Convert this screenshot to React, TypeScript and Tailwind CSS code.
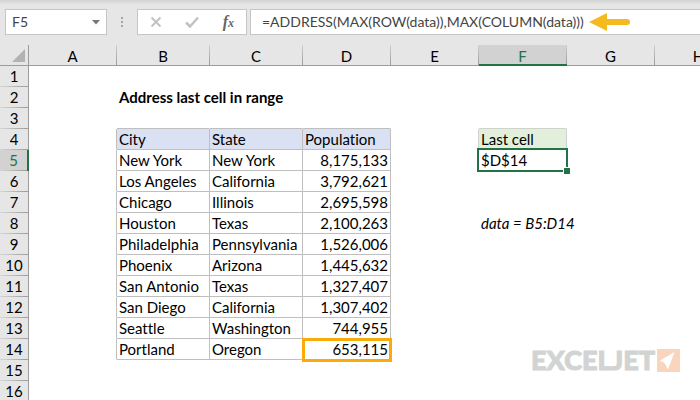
import React from "react";

type Entry = { city: string; state: string; population: string };

const data: Entry[] = [
  { city: "New York", state: "New York", population: "8,175,133" },
  { city: "Los Angeles", state: "California", population: "3,792,621" },
  { city: "Chicago", state: "Illinois", population: "2,695,598" },
  { city: "Houston", state: "Texas", population: "2,100,263" },
  { city: "Philadelphia", state: "Pennsylvania", population: "1,526,006" },
  { city: "Phoenix", state: "Arizona", population: "1,445,632" },
  { city: "San Antonio", state: "Texas", population: "1,327,407" },
  { city: "San Diego", state: "California", population: "1,307,402" },
  { city: "Seattle", state: "Washington", population: "744,955" },
  { city: "Portland", state: "Oregon", population: "653,115" },
];

const columns = [
  { name: "A", width: "w-[88px]" },
  { name: "B", width: "w-[93px]" },
  { name: "C", width: "w-[93px]" },
  { name: "D", width: "w-[88px]" },
  { name: "E", width: "w-[88px]" },
  { name: "F", width: "w-[88px]" },
  { name: "G", width: "w-[88px]" },
  { name: "H", width: "w-[88px]" },
];

const rows = Array.from({ length: 16 }, (_, i) => i + 1);

function cellText(col: string, row: number): string {
  if (col === "B" && row === 2) return "Address last cell in range";
  if (col === "F" && row === 4) return "Last cell";
  if (col === "F" && row === 5) return "$D$14";
  if (col === "F" && row === 8) return "data = B5:D14";
  if (row === 4) return { B: "City", C: "State", D: "Population" }[col] ?? "";
  const entry = data[row - 5];
  if (!entry) return "";
  return { B: entry.city, C: entry.state, D: entry.population }[col] ?? "";
}

// Each cell owns its right and bottom line; neighbours above and to the left close the box.
function cellStyle(col: string, row: number): string {
  const inTable = row >= 4 && row <= 14;
  const right =
    inTable && "ABCD".includes(col)
      ? "border-r-[#bfbfbf]"
      : row === 4 && "EF".includes(col)
        ? "border-r-[#d0d3cd]"
        : "border-r-transparent";
  const bottom =
    (inTable || row === 3) && "BCD".includes(col)
      ? "border-b-[#bfbfbf]"
      : row === 3 && col === "F"
        ? "border-b-[#d0d3cd]"
        : "border-b-transparent";
  let extra = "";
  if (row === 4 && "BCD".includes(col)) extra = "bg-[#d9e1f2]";
  if (row === 4 && col === "F") extra = "bg-[#e2efda]";
  if (row > 4 && col === "D") extra = "text-right";
  if (row === 2) extra = "font-bold";
  if (row === 8 && col === "F") extra = "italic";
  return `${right} ${bottom} ${extra}`;
}

function FormulaBar() {
  return (
    <header className="flex h-[45px] items-start bg-linear-to-b from-[#d2d2d2] to-[#e6e6e6] to-10% pt-[9px] pl-[5px] text-[#444]">
      <div className="flex h-[26px] w-[102px] shrink-0 items-center border border-[#c6c6c6] bg-white">
        <input
          aria-label="Name box"
          defaultValue="F5"
          className="w-full min-w-0 bg-transparent pl-1.5 text-sm outline-none"
        />
        <button aria-label="Show names" className="mr-1.5 shrink-0">
          <svg width="8" height="5" viewBox="0 0 8 5" className="block">
            <path d="M0 0h8L4 4.500z" fill="#777" />
          </svg>
        </button>
      </div>
      <svg width="30" height="26" viewBox="0 0 30 26" className="shrink-0" fill="#a6a6a6" aria-hidden="true">
        <path d="M14 8h2v2h-2zM14 12h2v2h-2zM14 16h2v2h-2z" />
      </svg>
      <div className="flex h-[26px] w-[110px] shrink-0 items-center justify-between border border-[#c6c6c6] bg-white pr-3 pl-3">
        <button aria-label="Cancel">
          <svg width="12" height="12" viewBox="0 0 12 12" fill="none" stroke="#c2c2c2" strokeWidth="2" className="block">
            <path d="M1.500 1.500l9 9M10.500 1.500l-9 9" />
          </svg>
        </button>
        <button aria-label="Enter">
          <svg width="14" height="12" viewBox="0 0 14 12" fill="none" stroke="#c2c2c2" strokeWidth="2.500" className="block">
            <path d="M1 6.500l4 4L13 1.500" />
          </svg>
        </button>
        <button aria-label="Insert function" className="font-['Liberation_Serif',serif] text-base leading-5 font-bold text-[#666] italic">
          f<span className="text-xs">x</span>
        </button>
      </div>
      <div className="ml-[3px] flex h-[26px] min-w-0 flex-1 items-center border border-r-0 border-[#c6c6c6] bg-white">
        <input
          aria-label="Formula"
          defaultValue="=ADDRESS(MAX(ROW(data)),MAX(COLUMN(data)))"
          className="w-[338px] shrink-0 bg-transparent pl-[11px] text-sm outline-none"
        />
        <svg width="42" height="20" viewBox="0 0 42 20" className="shrink-0" aria-hidden="true">
          <path d="M0 10L18 1v6h20a3 3 0 0 1 0 6H18v6z" fill="#f4bb20" />
        </svg>
      </div>
    </header>
  );
}

function ColumnHeader({ name }: { name: string }) {
  const active = name === "F";
  return (
    <th scope="col" className="p-0 font-normal">
      <div className={`flex h-[21px] ${active ? "border-b-2 border-[#217346] bg-[#d2d2d2] text-[#217346]" : "border-b border-[#9b9b9b]"}`}>
        <span className="flex-1 pt-px leading-5">{name}</span>
        <span className="w-px bg-linear-to-b from-[#cfcfcf] to-[#9b9b9b]" />
      </div>
    </th>
  );
}

function RowHeader({ row }: { row: number }) {
  const active = row === 5;
  return (
    <th scope="row" className={`p-0 font-normal ${active ? "bg-[#d2d2d2] text-[#217346]" : "bg-[#e6e6e6]"}`}>
      <div className={`h-[21px] ${active ? "border-r-2 border-[#217346]" : "border-r border-[#9b9b9b]"}`}>
        <div className="h-5 leading-5">{row}</div>
        <div className="h-px bg-linear-to-r from-[#d6d6d6] to-[#9b9b9b]" />
      </div>
    </th>
  );
}

function Sheet() {
  return (
    <table className="w-[743px] table-fixed border-separate border-spacing-0 text-[15px] leading-5 [font-variant-ligatures:none]">
      <colgroup>
        <col className="w-[29px]" />
        {columns.map((c) => (
          <col key={c.name} className={c.width} />
        ))}
      </colgroup>
      <thead className="bg-[#e6e6e6]">
        <tr>
          <td className="border-r border-b border-[#9b9b9b] p-0">
            <svg width="28" height="20" viewBox="0 0 28 20" className="block" aria-hidden="true">
              <path d="M25 4v13H12z" fill="#b2b2b2" />
            </svg>
          </td>
          {columns.map((c) => (
            <ColumnHeader key={c.name} name={c.name} />
          ))}
        </tr>
      </thead>
      <tbody>
        {rows.map((row) => (
          <tr key={row}>
            <RowHeader row={row} />
            {columns.map(({ name }) => (
              <td
                key={name}
                className={`relative h-[21px] border-r border-b bg-clip-padding px-0.5 py-0 whitespace-nowrap ${cellStyle(name, row)}`}
              >
                {cellText(name, row)}
                {name === "D" && row === 14 && (
                  <span className="absolute -top-px -right-0.5 -bottom-[3px] -left-px z-10 border-3 border-[#fbab09]" />
                )}
                {name === "F" && row === 5 && (
                  <span className="absolute -inset-0.5 z-10 border-2 border-[#217346]">
                    <span className="absolute -right-1 -bottom-1 size-[7px] border-t border-l border-white bg-[#217346]" />
                  </span>
                )}
              </td>
            ))}
          </tr>
        ))}
      </tbody>
    </table>
  );
}

function Watermark() {
  return (
    <div className="absolute right-5 bottom-6 flex items-center gap-0.5 text-[#d1d4d3]">
      <span className="text-[27px] leading-8 font-black [-webkit-text-stroke:1px_#d1d4d3]">
        EXCELJET
      </span>
      <svg width="23" height="23" viewBox="0 0 23 23" aria-hidden="true">
        <path d="M0 0h23v23H0z" fill="#f9d5bd" />
        <path d="M17.500 3L3 11.500l4.500 2.500 3.500 6.500z" fill="#fff" />
      </svg>
    </div>
  );
}

export default function App() {
  return (
    <main className="relative h-screen w-full overflow-hidden bg-white font-['Lato',sans-serif] text-black">
      <FormulaBar />
      <Sheet />
      <Watermark />
    </main>
  );
}
